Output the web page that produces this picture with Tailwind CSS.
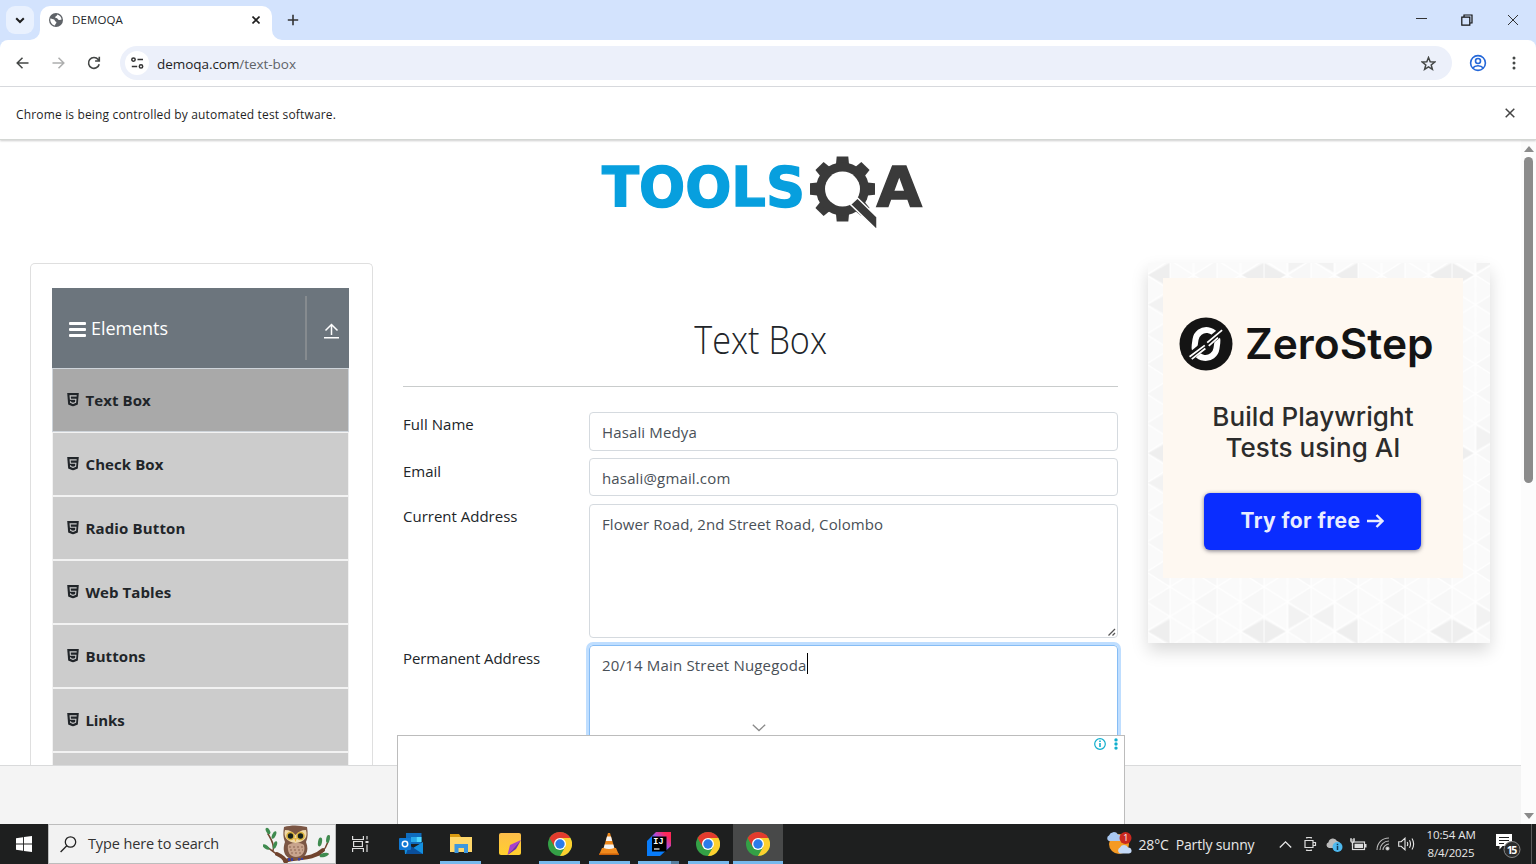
<!DOCTYPE html>
<html lang="en">
<head>
<meta charset="utf-8">
<title>DEMOQA</title>
<script src="https://cdn.jsdelivr.net/npm/@tailwindcss/browser@4"></script>
</head>
<body class="w-[1536px] h-[864px] overflow-hidden bg-white flex flex-col font-['Open_Sans','Noto_Sans',sans-serif] text-[15px] text-[#212529] whitespace-nowrap">
<svg class="hidden">
  <symbol id="html5" viewBox="0 0 12 14"><path fill="#212529" d="M0 0H12L11 12L6 14L1 12Z"/><path fill="none" stroke="#ccc" stroke-width="1.1" d="M9.8 3H3L3.3 6.4H9L8.7 9.8L6 10.7L3.5 9.8V8.6"/></symbol>
  <symbol id="chrome" viewBox="0 0 24 24">
    <circle cx="12" cy="12" r="12" fill="#34a046"/>
    <path fill="#e33b2e" d="M1.6 6A12 12 0 0 1 22.4 6H12L6.8 15Z"/>
    <path fill="#fdd02f" d="M22.4 6A12 12 0 0 1 12 24L17.2 15L12 6Z"/>
    <circle cx="12" cy="12" r="6" fill="#fff"/><circle cx="12" cy="12" r="4.7" fill="#2a7bea"/>
  </symbol>
</svg>

<!-- tab strip -->
<header class="h-10 shrink-0 bg-[#d3e3fd] flex">
  <div class="w-10 flex pl-1.5 pt-1.5">
    <div class="w-7 h-7 rounded-[9px] bg-[#e9f1fe] flex items-center justify-center">
      <svg width="10" height="7" viewBox="0 0 10 7" fill="none" stroke="#1f1f1f" stroke-width="2"><path d="M1.2 1.2L5 5L8.8 1.2"/></svg>
    </div>
  </div>
  <div class="relative w-[232px] h-[34px] mt-1.5 rounded-t-[10px] bg-white flex items-center pb-1.5 pl-[9px]">
    <svg class="absolute -left-2.5 bottom-0" width="10" height="10"><path fill="#fff" d="M10 0V10H0A10 10 0 0 0 10 0"/></svg>
    <svg class="absolute -right-2.5 bottom-0" width="10" height="10"><path fill="#fff" d="M0 0V10H10A10 10 0 0 1 0 0"/></svg>
    <svg width="14" height="14" viewBox="0 0 14 14"><circle cx="7" cy="7" r="7" fill="#5f6368"/><path fill="#fff" d="M1.3 5.6C3 6.2 5.600 6.200 5.800 7.400C6 8.600 7.400 8.200 7.400 9.400C7.400 10.500 6 10.400 6 12.600C3.200 12.200 1 9.500 1.300 5.600ZM8.300 1.500C8.500 3 6.200 2.800 6.200 4.200C6.400 5.600 8 4.800 8.600 5.800C9 7 10.800 7.400 12.600 6.600C12.400 4 10.600 2 8.300 1.500Z"/></svg>
    <span class="ml-[9px] text-[11.5px] w-[170px] tracking-[.1px]">DEMOQA</span>
    <svg class="ml-[10px]" width="8" height="8" viewBox="0 0 8 8" stroke="#1f1f1f" stroke-width="1.6"><path d="M.5.5L7.500 7.500M7.500.5L.5 7.500"/></svg>
  </div>
  <svg class="ml-[15px] mt-[14px]" width="12" height="12" stroke="#333" stroke-width="1.6"><path d="M6 .8V11.200M.8 6H11.200"/></svg>
  <div class="ml-auto flex items-start pr-[17px]">
    <svg class="mt-[18px]" width="11" height="2" stroke="#333"><path d="M0 .5H11"/></svg>
    <svg class="ml-[34px] mt-[14px]" width="12" height="12" fill="none" stroke="#111" stroke-width="1.200"><path d="M.8 3.200H8.800V11.200H.8ZM3 3V1H11V9H9"/></svg>
    <svg class="ml-[34px] mt-[14px]" width="12" height="12" stroke="#333"><path d="M1 1L11 11M11 1L1 11"/></svg>
  </div>
</header>

<!-- toolbar -->
<div class="h-[47px] shrink-0 bg-[#d3e3fd]"><div class="h-full bg-white rounded-t-[8px] border-b border-[#dadce0] flex items-center">
  <svg class="ml-[15.500px]" width="13" height="12" viewBox="0 0 13 12" fill="none" stroke="#444746" stroke-width="1.500"><path d="M6.500.8L1.200 6L6.500 11.200M1.200 6H12.500"/></svg>
  <svg class="ml-[23px]" width="13" height="12" viewBox="0 0 13 12" fill="none" stroke="#adaeae" stroke-width="1.500"><path d="M6.500.8L11.800 6L6.500 11.200M11.800 6H.5"/></svg>
  <svg class="ml-[22.500px]" width="14" height="14" viewBox="0 0 14 14" fill="none" stroke="#444746" stroke-width="1.600"><path d="M12.200 8.200A5.400 5.400 0 1 1 11.200 3.600L12 4.600M12.300 .8V5H8.100"/></svg>
  <div class="ml-[19px] w-[1332px] h-[34px] rounded-full bg-[#ecf0fa] flex items-center pl-[5px]">
    <div class="w-6 h-6 rounded-full bg-white flex items-center justify-center">
      <svg width="13" height="12" viewBox="0 0 13 12" fill="none" stroke="#333" stroke-width="1.500"><circle cx="2.500" cy="2.600" r="1.700"/><path d="M6.500 2.600H12M.8 9.400H6.200"/><circle cx="10" cy="9.400" r="1.700"/></svg>
    </div>
    <span class="ml-2 pt-0.5 text-[13.500px] tracking-[-.05px] text-[#1f1f1f]">demoqa.com<span class="text-[#5f6368]">/text-box</span></span>
    <svg class="ml-auto mr-4" width="15" height="15" viewBox="0 0 15 15" fill="none" stroke="#444746" stroke-width="1.500"><path d="M7.500 1.500L9.200 5.700L13.700 6L10.200 8.900L11.400 13.300L7.500 10.900L3.600 13.300L4.800 8.900L1.300 6L5.800 5.700Z"/></svg>
  </div>
  <svg class="ml-[17px]" width="18" height="18" viewBox="0 0 18 18" fill="none" stroke="#2467d8" stroke-width="1.600"><circle cx="9" cy="9" r="7.400"/><circle cx="9" cy="7" r="2.500"/><path d="M3.800 14C6 11 12 11 14.200 14"/></svg>
  <svg class="ml-[25px]" width="4" height="14" fill="#444746"><circle cx="2" cy="2" r="1.500"/><circle cx="2" cy="7" r="1.500"/><circle cx="2" cy="12" r="1.500"/></svg>
</div></div>

<!-- info bar -->
<div class="h-[53px] shrink-0 relative z-10 bg-white border-b border-[#d4d7d4] shadow-[0_1px_2px_rgba(0,0,0,.2)] flex items-center justify-between pl-4 pr-[21px]">
  <span class="text-[12px] tracking-[.16px] pt-[3px] text-[#1f1f1f]">Chrome is being controlled by automated test software.</span>
  <svg width="10" height="10" stroke="#444" stroke-width="1.500"><path d="M.7.7L9.300 9.300M9.300.7L.7 9.300"/></svg>
</div>

<!-- page -->
<div class="h-[684px] shrink-0 flex relative">
  <main class="w-[1521px] flex flex-col">
    <div class="h-[123px] shrink-0 flex pl-[590px] pt-[5px]">
      <svg width="345" height="95" viewBox="0 0 345 95">
        <text x="12" y="60.500" font-family="DejaVu Sans" font-weight="700" font-size="54.500" fill="#079fde" stroke="#079fde" stroke-width="1.400" textLength="203" lengthAdjust="spacingAndGlyphs">TOOLS</text>
        <g transform="translate(252.500 44)">
          <g fill="#3a3a3a">
            <path id="tooth" d="M-6.500 -25L-5.800 -32.500H5.800L6.500 -25V25L5.800 32.500H-5.800L-6.500 25Z"/>
            <use href="#tooth" transform="rotate(45)"/><use href="#tooth" transform="rotate(90)"/><use href="#tooth" transform="rotate(135)"/>
            <circle r="26.500"/>
          </g>
          <circle r="17.500" fill="#fff"/>
          <path fill="#3a3a3a" stroke="#fff" stroke-width="1.500" d="M8 15.500L15 9L34.500 28V41Z"/>
        </g>
        <text x="286.500" y="60.500" font-family="DejaVu Sans" font-weight="700" font-size="54.500" fill="#3a3a3a" stroke="#3a3a3a" stroke-width="1.400" textLength="45.500" lengthAdjust="spacingAndGlyphs">A</text>
      </svg>
    </div>
    <div class="h-[502px] shrink-0 flex items-start">
      <!-- sidebar -->
      <aside class="ml-[30px] w-[343px] h-[502px] overflow-hidden border border-b-0 border-[#dfdfdf] rounded-t-[5px] pl-[21px] pt-6">
        <div class="w-[297px] h-20 bg-[#6c757d] flex items-center text-white">
          <svg class="ml-[17px] mt-[3px]" width="17" height="15" fill="#fff"><rect width="17" height="3" rx="1"/><rect y="6" width="17" height="3" rx="1"/><rect y="12" width="17" height="3" rx="1"/></svg>
          <span class="ml-[5px] text-[18px] w-[214px] tracking-[-.06px]">Elements</span>
          <div class="w-0.5 h-16 bg-[#868b8f]"></div>
          <svg class="ml-[16.500px] mt-[6px]" width="15" height="16" fill="none" stroke="#fff" stroke-width="1.500"><path d="M7.500 12V1.500M1.500 7.500L7.500 1.500L13.500 7.500M0 14.800H15"/></svg>
        </div>
        <ul class="w-[297px] text-[15px] font-bold tracking-[.08px]">
          <li class="h-16 bg-[#a9a9a9] border border-[#ced4da] flex items-center pl-3.5"><svg class="mr-[6.500px]" width="12" height="13.500"><use href="#html5"/></svg>Text Box</li>
          <li class="h-16 bg-[#ccc] border border-[#f2f2f2] flex items-center pl-3.5"><svg class="mr-[6.500px]" width="12" height="13.500"><use href="#html5"/></svg>Check Box</li>
          <li class="h-16 bg-[#ccc] border border-[#f2f2f2] flex items-center pl-3.5 tracking-[.14px]"><svg class="mr-[6.500px]" width="12" height="13.500"><use href="#html5"/></svg>Radio Button</li>
          <li class="h-16 bg-[#ccc] border border-[#f2f2f2] flex items-center pl-3.5"><svg class="mr-[6.500px]" width="12" height="13.500"><use href="#html5"/></svg>Web Tables</li>
          <li class="h-16 bg-[#ccc] border border-[#f2f2f2] flex items-center pl-3.5"><svg class="mr-[6.500px]" width="12" height="13.500"><use href="#html5"/></svg>Buttons</li>
          <li class="h-16 bg-[#ccc] border border-[#f2f2f2] flex items-center pl-3.5 tracking-[-.1px]"><svg class="mr-[6.500px]" width="12" height="13.500"><use href="#html5"/></svg>Links</li>
          <li class="h-16 bg-[#ccc] border border-[#f2f2f2]"></li>
        </ul>
      </aside>
      <!-- form -->
      <section class="ml-[30px] w-[715px]">
        <h1 class="h-[123px] pt-[52px] text-center text-[38px] leading-[49px] font-light"><span class="inline-block scale-x-90">Text Box</span></h1>
        <div class="h-px bg-[#c9cccc]"></div>
        <div class="flex mt-[25px] h-[38px]"><label class="w-[186px] leading-6 tracking-[.05px]">Full Name</label><div class="w-[529px] h-[39px] rounded border border-[#d5dadf] pl-3 leading-[38px] tracking-[.14px] text-[#495057]">Hasali Medya</div></div>
        <div class="flex mt-2 h-[38px]"><label class="w-[186px] leading-6 pt-px">Email</label><div class="w-[529px] h-[38px] rounded border border-[#d5dadf] pl-3 pt-px leading-[37px] tracking-[.15px] text-[#495057]">hasali@gmail.com</div></div>
        <div class="flex mt-2 h-[134px]"><label class="w-[186px] leading-6">Current Address</label><div class="w-[529px] rounded border border-[#d5dadf] pl-3 pt-[7px] leading-6 tracking-[.09px] text-[#495057] flex justify-between">Flower Road, 2nd Street Road, Colombo<svg class="self-end mb-px mr-px" width="8" height="8" stroke="#555" stroke-width="1.300"><path d="M.5 7.500L7 1M4.500 7.500L7 5"/></svg></div></div>
        <div class="flex mt-[7px] h-[120px]"><label class="w-[186px] leading-6 pt-px tracking-[-.08px]">Permanent Address</label><div class="w-[529px] rounded border border-[#86bdf5] shadow-[0_0_0_3px_#bfdeff] pl-3 pt-[7px] leading-6 tracking-[.18px] text-[#495057] flex">20/14 Main Street Nugegoda<span class="w-px h-[21px] bg-black"></span></div></div>
      </section>
      <!-- promo -->
      <div class="ml-[30px] w-[342px] h-[380px] shadow-[0_8px_16px_rgba(0,0,0,.15)] relative bg-[#fafafa] pl-[15px] pt-[15px]">
        <svg class="absolute inset-0" width="342" height="380">
          <defs>
            <pattern id="lines" width="47" height="29.700" patternUnits="userSpaceOnUse" patternTransform="translate(-1.500 -2.850)"><path fill="#f7f7f7" d="M0 14.850L23.500 0V29.700Z"/><path fill="none" stroke="#fff" stroke-width="1.200" d="M0 14.850L23.500 0L47 14.850L23.500 29.700ZM0 0V29.700M47 0V29.700M23.500 0V29.700"/></pattern>
            <pattern id="tris" width="188" height="178.200" patternUnits="userSpaceOnUse" patternTransform="translate(-1.500 -2.850)"><path fill="#eeeeee" d="M2 14.850L23 3V27ZM96 14.850L117 3V27ZM139 14.850L118 3V27Z"/><path fill="#f2f2f2" d="M2 44.550L23 33V56ZM142 -12V12L163 0ZM187 -12V12L166 0ZM142 166V190L163 178ZM187 166V190L166 178Z"/></pattern>
          </defs>
          <rect width="342" height="380" fill="url(#lines)"/><rect width="342" height="380" fill="url(#tris)"/>
        </svg>
        <div class="relative w-[300px] h-[300px] bg-[#fef8f1] font-['Inter',sans-serif] flex flex-col items-center">
          <div class="self-start flex items-center h-[54px] mt-[39px] ml-4">
            <svg width="54" height="54" viewBox="0 0 54 54"><circle cx="27" cy="27" r="26.500" fill="#141414"/><g transform="rotate(8 27 27)" fill="none"><rect x="16" y="13" width="22" height="28" rx="11" stroke="#fff" stroke-width="6"/><path stroke="#141414" stroke-width="8" d="M12 43L42 11"/><path stroke="#fff" stroke-width="1.800" d="M12.500 42L26 28.500M28 25.500L41 11M15 44L27 31.500M30 28.500L38 19"/></g></svg>
            <span class="ml-3 text-[42.500px] font-semibold text-[#141414]">ZeroStep</span>
          </div>
          <div class="mt-[30px] text-[26px] leading-[31px] font-medium text-[#2c2c2c] text-center tracking-[.05px]">Build Playwright<br>Tests using AI</div>
          <div class="mt-[30px] mr-px w-[217px] h-[57px] rounded-[6px] bg-[#0a2dff] shadow-[0_1px_4px_rgba(0,0,30,.5)] flex items-center justify-center text-[21px] tracking-[.4px] font-bold text-[#e9edff] pb-0.5">Try for free<svg class="ml-[7px]" width="17" height="14" fill="none" stroke="#e9edff" stroke-width="2.400"><path d="M0 7H15.500M9.500 1L15.500 7L9.500 13"/></svg></div>
        </div>
      </div>
    </div>
    <div class="h-[59px] shrink-0 bg-[#f4f4f4] border-t border-[#d9dadb]"></div>
  </main>
  <!-- scrollbar -->
  <div class="w-[15px] bg-[#fcfcfc] flex flex-col items-center pt-[6px] pb-[5px]">
    <svg width="10" height="6"><path fill="#8b8b8b" d="M0 6L5 0L10 6Z"/></svg>
    <div class="mt-[5px] w-[9px] h-[326px] rounded-full bg-[#8b8b8b]"></div>
    <svg class="mt-auto" width="10" height="6"><path fill="#8b8b8b" d="M0 0L5 6L10 0Z"/></svg>
  </div>
  <!-- anchored ad -->
  <svg class="absolute left-[752px] top-[583.500px]" width="14" height="8" fill="none" stroke="#8a8a8a" stroke-width="1.300"><path d="M.8.8L7 6.500L13.200.8"/></svg>
  <div class="absolute left-[397px] top-[595px] w-[728px] h-[89px] bg-white border border-b-0 border-[#bcbcbc] flex justify-end pr-[6px] pt-[2px]">
    <svg width="12" height="12" fill="none" stroke="#11aecd" stroke-width="1.200"><circle cx="6" cy="6" r="5.300"/><path stroke-width="1.600" d="M6 5V9M6 2.500V4"/></svg>
    <svg class="ml-2" width="4" height="12" fill="#11aecd"><circle cx="2" cy="1.900" r="1.700"/><circle cx="2" cy="6" r="1.700"/><circle cx="2" cy="10.100" r="1.700"/></svg>
  </div>
</div>

<!-- taskbar -->
<footer class="h-10 shrink-0 bg-[#1e1f1f] flex text-[#e8e8e8]">
  <div class="w-12 flex items-center justify-center"><svg width="16" height="16" fill="#fff"><path d="M0 2.300L7 1.300V7.600H0ZM7.900 1.100L16 0V7.600H7.900ZM0 8.500H7V14.800L0 13.800ZM7.900 8.500H16V16L7.900 14.900Z"/></svg></div>
  <div class="w-[288px] h-full bg-[#f2f2f2] border border-[#bdbdbd] flex items-center text-[#333]">
    <svg class="ml-[11px]" width="17" height="17" fill="none" stroke="#222" stroke-width="1.300"><circle cx="10.500" cy="6" r="5.200"/><path d="M6.800 9.700L.6 16"/></svg>
    <span class="ml-[11px] text-[14.500px] w-[175px] tracking-[-.13px]">Type here to search</span>
    <svg width="68" height="38" viewBox="0 0 68 38">
      <g fill="none" stroke="#70432d" stroke-linecap="round"><path stroke-width="4" d="M23 38C22 34 19 31 14 29M22 36C35 31 48 36 60 25"/><path stroke-width="1.500" d="M15 30C10 27 7 24 4 22M10 26C12 20 8 14 5 9M54 30C61 27 65 20 66 11M55 30L65 29"/></g>
      <g fill="#3f8b4f"><ellipse cx="5" cy="6" rx="1.800" ry="3.500" transform="rotate(-30 5 6)"/><ellipse cx="11" cy="10" rx="1.800" ry="4" transform="rotate(25 11 10)"/><ellipse cx="3" cy="22" rx="1.800" ry="4" transform="rotate(-55 3 22)"/><ellipse cx="12" cy="20" rx="1.800" ry="4" transform="rotate(20 12 20)"/><ellipse cx="57" cy="17" rx="2" ry="4.500" transform="rotate(10 57 17)"/><ellipse cx="65" cy="14" rx="1.800" ry="4" transform="rotate(10 65 14)"/><ellipse cx="61" cy="30" rx="2" ry="4.500" transform="rotate(75 61 30)"/></g>
      <path fill="#7b5644" d="M21 2C28 0 36 0 44 2C45 8 45 12 43 17C47 27 42 33 34 35C24 35 18 28 22 17C20 12 20 8 21 2Z"/>
      <path fill="#c8a48d" d="M25 20C30 17 37 17 41 20C43 28 38 32 33 32C27 32 24 27 25 20Z"/>
      <path stroke="#8d6653" stroke-width="1" stroke-dasharray="2 2" d="M26 22H40M27 25H40M28 28H39"/>
      <path fill="#f0d9a8" d="M22 5C27 5 30 7 32.500 10C35 7 38 5 43 5C45 12 42 17 32.500 18C24 17 20 12 22 5Z"/>
      <circle cx="27.500" cy="11" r="4.300" fill="#d8b13c"/><circle cx="37.500" cy="11" r="4.300" fill="#d8b13c"/><circle cx="27.500" cy="11" r="2.700" fill="#16211d"/><circle cx="37.500" cy="11" r="2.700" fill="#16211d"/><path fill="#e9b33c" d="M31 13H34L32.500 17Z"/>
      <path stroke="#3b3fa0" stroke-width="2" d="M26 33V36M29 33V36M36 33V35.500M39 33V35"/>
    </svg>
  </div>
  <div class="w-[50.500px] flex items-center justify-center pr-px"><svg width="17" height="16" fill="none" stroke="#ddd" stroke-width="1.200"><path d="M.6 0V3.500H11.400V0M1.600 5.500H10.400V10.500H1.600ZM.6 16V12.500H11.400V16M15 0V3.500M15 8.500V16"/><path stroke-width="2" d="M13.500 6H16.500"/></svg></div>
  <div class="w-[49.500px] flex items-center justify-center">
    <svg width="24" height="22" viewBox="0 0 24 22"><path fill="#0f6cbd" d="M7 0H22.500V11H7Z"/><path fill="#28a8ea" d="M12 4H17.500V9H12Z"/><path fill="#50d9ff" d="M17.500 4H22.500V9H17.500Z"/><path fill="#1490df" d="M5 10L14 15L24 9V21H6Z"/><path fill="#0a4f9c" d="M10 12L24 21H7Z"/><rect y="5" width="12" height="12" rx="1" fill="#0f78d4"/><circle cx="6" cy="11" r="2.700" fill="none" stroke="#fff" stroke-width="1.500"/></svg>
  </div>
  <div class="w-[49.500px] flex flex-col items-center justify-between pt-[10px]"><svg width="22" height="20"><path fill="#d99a10" d="M0 0H9L11 3H0Z"/><path fill="#ffd76a" d="M0 3H22V18H0Z"/><path fill="#3d97de" d="M4.500 10H18V19H14V14H8.500V19H4.500Z"/></svg><div class="w-[41px] h-[3px] bg-[#76b9ed]"></div></div>
  <div class="w-[49.500px] flex items-center justify-center"><svg width="22" height="22"><defs><linearGradient id="note" x2="0" y2="1"><stop stop-color="#fdbd4a"/><stop offset="1" stop-color="#ffd02e"/></linearGradient></defs><path fill="url(#note)" d="M2 0H20A2 2 0 0 1 22 2V20A2 2 0 0 1 20 22H2A2 2 0 0 1 0 20V2A2 2 0 0 1 2 0Z"/><path fill="#a83fd0" d="M22 7L8.500 22L11 12Z"/><path fill="#6a2bb5" d="M22 7L17 16L8.500 22Z"/></svg></div>
  <div class="w-[49.500px] flex flex-col items-center justify-between pt-2"><svg width="24" height="24"><use href="#chrome"/></svg><div class="w-[41px] h-[3px] bg-[#76b9ed]"></div></div>
  <div class="w-[49.500px] flex flex-col items-center justify-between pt-[9px]"><svg width="20" height="22"><path fill="#f08a1d" d="M3 15H17L20 22H0Z"/><path fill="#c95f08" d="M0 20.500H20V22H0Z"/><path fill="#f08a1d" d="M9 0H11L16 17Q10 20 4 17Z"/><path fill="#f4f4f4" d="M8 3.500H12L13.200 8H6.800ZM5.700 11.500H14.300L15.300 15Q10 17 4.700 15Z"/></svg><div class="w-[41px] h-[3px] bg-[#76b9ed]"></div></div>
  <div class="w-[49.500px] flex flex-col items-center justify-between pt-2"><svg width="24" height="24"><defs><linearGradient id="idea" x1="0" x2="1" y1="1" y2="0"><stop offset=".45" stop-color="#087cfa"/><stop offset=".62" stop-color="#b14bd6"/><stop offset=".85" stop-color="#fe2857"/></linearGradient></defs><path fill="url(#idea)" d="M0 9L9 0H24V14L13 24H0Z"/><rect x="5" y="4.500" width="14.500" height="15" fill="#000"/><text x="6.300" y="12" font-family="Liberation Mono" font-weight="700" font-size="8.500" fill="#fff">IJ</text><path stroke="#fff" stroke-width="1.200" d="M7 17H12.500"/></svg><div class="w-[41px] h-[3px] bg-[#76b9ed] flex justify-end"><div class="w-2 h-full bg-[#557f9f]"></div></div></div>
  <div class="w-[49.500px] flex flex-col items-center justify-between pt-2"><svg width="24" height="24"><use href="#chrome"/></svg><div class="w-[41px] h-[3px] bg-[#76b9ed]"></div></div>
  <div class="w-[49.500px] flex flex-col items-center justify-between pt-2 bg-[#484949]"><svg width="24" height="24"><use href="#chrome"/></svg><div class="w-full h-[3px] bg-[#76b9ed]"></div></div>
  <div class="ml-auto flex items-center">
    <svg width="26" height="24" viewBox="0 0 26 24"><circle cx="12" cy="12" r="10" fill="#f59a23"/><path fill="#a9c8f2" d="M2 9A3 3 0 0 1 2 3.500A5 5 0 0 1 11 2.500A3.500 3.500 0 0 1 13 9Z"/><path fill="#c4d9f7" d="M13 21.500A3.300 3.300 0 0 1 13 15.500A4.500 4.500 0 0 1 21 15.500A3 3 0 0 1 22 21.500Z"/><circle cx="18.500" cy="6" r="6" fill="#c9281f"/><text x="16.200" y="9.300" font-family="Open Sans" font-size="9" fill="#fff">1</text></svg>
    <span class="ml-[6px] text-[14px] w-[140px] tracking-[-.15px] whitespace-pre">28°C  Partly sunny</span>
    <svg width="13" height="7" fill="none" stroke="#e8e8e8" stroke-width="1.300"><path d="M.8 6.500L6.500.9L12.200 6.500"/></svg>
    <svg class="ml-3" width="13" height="14" fill="none" stroke="#ddd" stroke-width="1.200"><path d="M1 3.500H9V10.500H1ZM9 5.500H11.500V8.500H9M2 .8Q5 0 8 .8M2 13.200Q5 14 8 13.200"/></svg>
    <svg class="ml-[9px]" width="17" height="15"><path fill="#bbb" d="M3 11A3 3 0 0 1 2.500 5.200A4.500 4.500 0 0 1 11 4A4 4 0 0 1 14 8L8 11Z"/><circle cx="11.500" cy="10" r="5" fill="#4db8ee"/><path stroke="#103a5a" stroke-width="1.500" d="M11.500 9V13M11.500 6.800V8.200"/></svg>
    <svg class="ml-[7px]" width="17" height="13" fill="none" stroke="#ddd" stroke-width="1.200"><rect x="2.500" y="4" width="12" height="7.500"/><path fill="#ddd" stroke="none" d="M4.500 5.800H13V10H4.500ZM15 6H16.500V9.500H15Z"/><path d="M0 2H5M1 0V3.500Q2.500 5 4 3.500V0M2.500 4V8"/></svg>
    <svg class="ml-[9px]" width="14" height="14" fill="none" stroke="#bbb" stroke-width="1.100"><path d="M1 13C1 6 6 1 13 1M4 13C4 8 8 4 13 4M7 13C7 10 10 7 13 7"/><circle cx="11.500" cy="11.500" r="1.500" fill="#eee"/></svg>
    <svg class="ml-2" width="17" height="14" fill="none" stroke="#e8e8e8" stroke-width="1.100"><path d="M.7 4.700H3.200L7 1.200V12.800L3.200 9.300H.7ZM9.200 5Q10.300 7 9.200 9M11.500 3.300Q13.500 7 11.500 10.700M14 1.500Q17.300 7 14 12.500"/></svg>
    <div class="ml-3 w-[49px] text-[11.500px] leading-[18px] text-center tracking-[-.1px]">10:54 AM<br>8/4/2025</div>
    <svg class="ml-[20px] mt-1" width="26" height="28"><path fill="#fff" d="M0 2H16V14H6.500L3.500 17.500V14H0Z"/><path stroke="#1e1f1f" d="M3 5.500H13M3 8.500H13M3 11.500H8"/><circle cx="16" cy="17.500" r="8" fill="#2b2c2c" stroke="#888"/><text x="10.800" y="21.500" font-family="Open Sans" font-weight="700" font-size="10.500" textLength="10.500" fill="#fff">15</text></svg>
    <div class="ml-[9px] w-px h-10 bg-[#5a5a5a] mr-[4.500px]"></div>
  </div>
</footer>
</body>
</html>
